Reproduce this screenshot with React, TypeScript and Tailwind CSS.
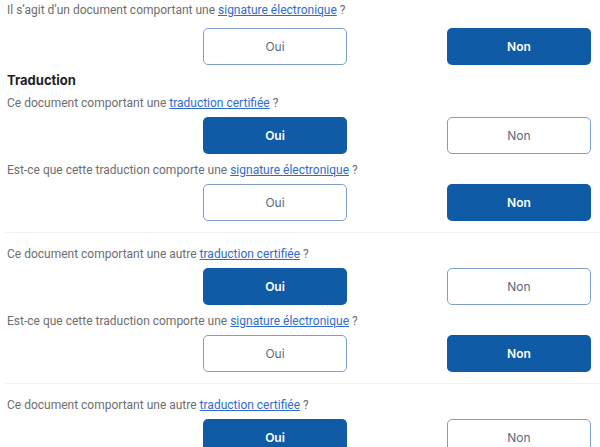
import { Fragment } from 'react';

type Choice = 'oui' | 'non';

type Question = {
    before: string;
    link: string;
    answer: Choice;
};

const questions: Question[][] = [
    [
        { before: 'Ce document comportant une ', link: 'traduction certifiée', answer: 'oui' },
        { before: 'Est-ce que cette traduction comporte une ', link: 'signature électronique', answer: 'non' },
    ],
    [
        { before: 'Ce document comportant une autre ', link: 'traduction certifiée', answer: 'oui' },
        { before: 'Est-ce que cette traduction comporte une ', link: 'signature électronique', answer: 'non' },
    ],
    [{ before: 'Ce document comportant une autre ', link: 'traduction certifiée', answer: 'oui' }],
];

function Label({ before, link }: { before: string; link: string }) {
    return (
        <p className="h-5 text-[12px] leading-5 text-[#6e6e6e]">
            {before}
            <a href="#" className="text-[#2f6bd0] underline">
                {link}
            </a>{' '}
            ?
        </p>
    );
}

function Answer({ value }: { value: Choice }) {
    const base = 'flex h-[37px] w-[144px] items-center justify-center rounded-[5px] text-[12px]';
    const on = 'bg-[#0f5ba6] text-white font-semibold';
    const off = 'border border-[#7f9fc8] bg-white text-[#5a6a80] font-normal';
    return (
        <div className="flex gap-[100px] pl-[196px] font-[family-name:Inter,sans-serif]">
            <button className={`${base} ${value === 'oui' ? on : off}`}>Oui</button>
            <button className={`${base} ${value === 'non' ? on : off}`}>Non</button>
        </div>
    );
}

export default function App() {
    return (
        <div className="w-[600px] bg-white pl-[7px] font-[family-name:Roboto,sans-serif]">
            <Label before="Il s’agit d’un document comportant une " link="signature électronique" />
            <div className="mt-2">
                <Answer value="non" />
            </div>
            <h3 className="mt-[5px] h-5 font-[family-name:Inter,sans-serif] text-[13px] font-bold leading-5 text-[#1f1f1f]">Traduction</h3>
            {questions.map((group, gi) => (
                <Fragment key={gi}>
                    {gi > 0 && <div className="my-[11px] -ml-[2px] border-t border-[#f3f3f3]" />}
                    <div className={gi === 0 ? 'mt-[3px] flex flex-col gap-[6px]' : 'flex flex-col gap-[6px]'}>
                        {group.map((q, qi) => (
                            <div key={qi}>
                                <Label before={q.before} link={q.link} />
                                <div className="mt-1">
                                    <Answer value={q.answer} />
                                </div>
                            </div>
                        ))}
                    </div>
                </Fragment>
            ))}
        </div>
    );
}
